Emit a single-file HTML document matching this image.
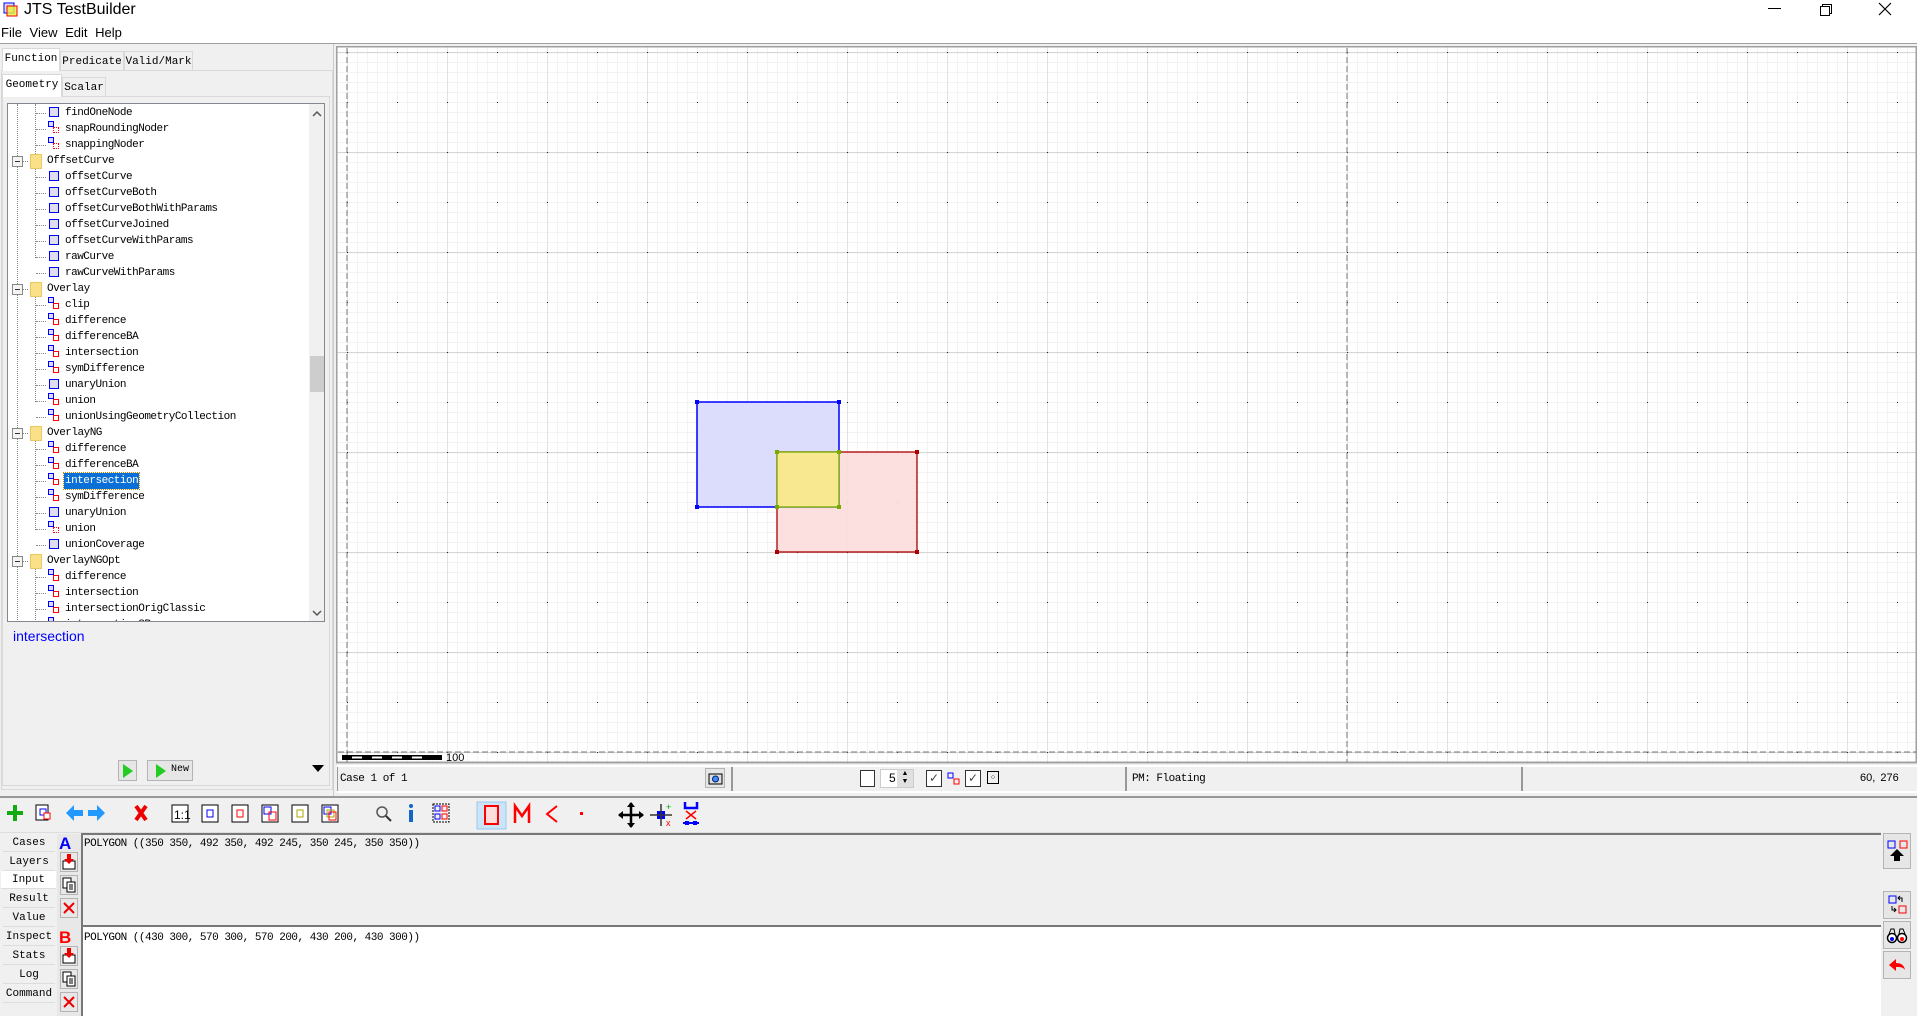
<!DOCTYPE html>
<html><head><meta charset="utf-8"><style>
*{box-sizing:border-box;margin:0;padding:0}
body{width:1917px;height:1016px;background:#f0f0f0;position:relative;overflow:hidden;font-family:"Liberation Sans",sans-serif;}
.a{position:absolute}
.m{font-family:"Liberation Mono","Noto Serif CJK SC",monospace;font-size:11px;color:#000;letter-spacing:-0.5px}
.row{position:absolute;height:16px;line-height:16px;white-space:nowrap}
.ic{position:absolute}
.tab{position:absolute;border:1px solid #d9d9d9;border-bottom:none;background:#f0f0f0;font-family:"Liberation Mono",monospace;font-size:11px;text-align:center}
.lt{position:absolute;left:3px;width:52px;height:18px;font-family:"Liberation Mono",monospace;font-size:11px;text-align:center;line-height:18px;border-bottom:1px solid #ddd;background:#f0f0f0}
.btn{position:absolute;border:1px solid #b4b4b4;background:#e6e6e6}
</style></head><body>
<!-- title bar -->
<div class="a" style="left:0;top:0;width:1917px;height:43px;background:#fff"></div>
<svg class="a" style="left:3px;top:2px" width="16" height="16"><rect x="1" y="1" width="10" height="10" fill="#dde" stroke="#00f"/><rect x="4" y="4" width="10" height="10" fill="#ee3" stroke="#e00" fill-opacity=".8"/></svg>
<div class="a" style="left:24px;top:0;font-size:16px;line-height:20px">JTS TestBuilder</div>
<div class="a" style="left:1768px;top:8px;width:13px;height:1px;background:#000"></div>
<div class="a" style="left:1822px;top:4px;width:10px;height:10px;border:1px solid #000"></div>
<div class="a" style="left:1820px;top:6px;width:10px;height:10px;border:1px solid #000;background:#fff"></div>
<svg class="a" style="left:1878px;top:2px" width="14" height="14"><path d="M1 1L13 13M13 1L1 13" stroke="#000" stroke-width="1.2"/></svg>
<div class="a" style="left:1px;top:25px;font-size:13px;line-height:16px;word-spacing:4px">File View Edit Help</div>
<div class="a" style="left:0;top:43px;width:1917px;height:1px;background:#a0a0a0"></div>

<!-- left panel -->
<div class="a" style="left:1px;top:70px;width:332px;height:720px;border:1px solid #d9d9d9;background:#f0f0f0"></div>
<div class="tab" style="left:2px;top:48px;width:58px;height:23px;background:#fff;line-height:20px">Function</div>
<div class="tab" style="left:60px;top:51px;width:64px;height:19px;line-height:20px">Predicate</div>
<div class="tab" style="left:124px;top:51px;width:69px;height:19px;line-height:20px">Valid/Mark</div>
<div class="a" style="left:2px;top:96px;width:328px;height:690px;border:1px solid #d9d9d9;background:#f0f0f0"></div>
<div class="tab" style="left:2px;top:74px;width:60px;height:23px;background:#fff;line-height:20px">Geometry</div>
<div class="tab" style="left:62px;top:77px;width:44px;height:19px;line-height:20px">Scalar</div>

<div class="a m" style="left:7px;top:103px;width:318px;height:519px;border:1px solid #828790;background:#fff;overflow:hidden">
 <div class="a" style="left:9px;top:0;height:520px;border-left:1px dotted #888"></div>
 <div class="a" style="left:27px;top:0;height:52px;border-left:1px dotted #888"></div>
 <div class="a" style="left:27px;top:58px;height:96px;border-left:1px dotted #888"></div>
 <div class="a" style="left:27px;top:186px;height:112px;border-left:1px dotted #888"></div>
 <div class="a" style="left:27px;top:330px;height:96px;border-left:1px dotted #888"></div>
 <div class="a" style="left:27px;top:458px;height:70px;border-left:1px dotted #888"></div>
 <div id="tree"></div>
 <div class="a" style="left:301px;top:0;width:16px;height:518px;background:#f0f0f0"></div>
 <div class="a" style="left:302px;top:252px;width:14px;height:36px;background:#cdcdcd"></div>
 <svg class="a" style="left:304px;top:6px" width="10" height="8"><path d="M1 6L5 2L9 6" stroke="#555" stroke-width="1.5" fill="none"/></svg>
 <svg class="a" style="left:304px;top:505px" width="10" height="8"><path d="M1 2L5 6L9 2" stroke="#555" stroke-width="1.5" fill="none"/></svg>
</div>
<div class="a" style="left:13px;top:628px;font-size:14px;color:#00f">intersection</div>
<div class="btn" style="left:118px;top:760px;width:19px;height:21px"></div>
<svg class="a" style="left:122px;top:763px" width="12" height="16"><path d="M1 1L11 8L1 15Z" fill="#2c2"/></svg>
<div class="btn" style="left:147px;top:760px;width:46px;height:21px"></div>
<svg class="a" style="left:155px;top:763px" width="12" height="16"><path d="M1 1L11 8L1 15Z" fill="#2c2"/></svg>
<div class="a" style="left:171px;top:764px;font-family:'Liberation Mono',monospace;font-size:10px">New</div>
<svg class="a" style="left:312px;top:765px" width="12" height="8"><path d="M0 0H12L6 7Z" fill="#000"/></svg>
<div class="a" style="left:333px;top:44px;width:4px;height:752px;background:#f0f0f0;border-left:1px solid #ccc"></div>

<!-- canvas -->
<svg class="a" style="left:336px;top:46px" width="1581" height="718">
<defs>
<pattern id="mn" x="1" y="6" width="10" height="10" patternUnits="userSpaceOnUse"><path d="M0 0V10M0 0H10" stroke="#ececec" stroke-width="1.3"/></pattern>
<pattern id="mj" x="11" y="6" width="100" height="100" patternUnits="userSpaceOnUse"><path d="M0 0.5V100M0 0.5H100" stroke="#d6d6d6" stroke-width="1.3"/></pattern>
<pattern id="dt" x="11" y="6" width="50" height="50" patternUnits="userSpaceOnUse"><rect x="-1" y="-1" width="2" height="2" fill="#222"/></pattern>
</defs>
<rect width="1581" height="718" fill="#fff"/>
<rect width="1581" height="718" fill="url(#mn)"/>
<rect width="1581" height="718" fill="url(#mj)"/>
<rect width="1581" height="718" fill="url(#dt)"/>
<rect x="0.5" y="0.5" width="1580" height="716" fill="none" stroke="#a0a0a0" stroke-width="2"/>
<path d="M11 2V716M1011 2V716M2 706H1581" stroke="#777" stroke-dasharray="6 3" stroke-width="1"/>
<g transform="translate(11,706)">
<rect x="350" y="-350" width="142" height="105" fill="#dcdcfc" stroke="#00f" stroke-width="1.3"/>
<rect x="430" y="-300" width="140" height="100" fill="#fcdcdc" fill-opacity=".9" stroke="#a00" stroke-width="1.3"/>
<rect x="350" y="-350" width="142" height="105" fill="none" stroke="#00f" stroke-width="1.3"/>
<rect x="430" y="-300" width="62" height="55" fill="#f8e890" stroke="#7a0" stroke-width="1.3"/>
<g fill="#00f"><rect x="348" y="-352" width="4" height="4"/><rect x="490" y="-352" width="4" height="4"/><rect x="348" y="-247" width="4" height="4"/></g>
<g fill="#a00"><rect x="568" y="-302" width="4" height="4"/><rect x="568" y="-202" width="4" height="4"/><rect x="428" y="-202" width="4" height="4"/></g>
<g fill="#7a0"><rect x="428" y="-302" width="4" height="4"/><rect x="490" y="-302" width="4" height="4"/><rect x="428" y="-247" width="4" height="4"/><rect x="490" y="-247" width="4" height="4"/></g>
</g>
<rect x="6" y="709" width="100" height="5" fill="#000"/>
<path d="M16 711.5H96" stroke="#fff" stroke-width="2" stroke-dasharray="10 10"/>
<text x="110" y="715" font-family="Liberation Sans" font-size="11">100</text>
</svg>

<!-- status row -->
<div class="a" style="left:337px;top:765px;width:1580px;height:28px;background:#fff"></div>
<div class="a" style="left:337px;top:767px;width:394px;height:24px;background:#f0f0f0;border-left:1px solid #999"></div>
<div class="a m" style="left:340px;top:773px">Case 1 of 1</div>
<div class="btn" style="left:705px;top:768px;width:20px;height:20px"></div>
<svg class="a" style="left:708px;top:771px" width="15" height="14"><rect x="1" y="3" width="13" height="10" fill="#ddd" stroke="#000"/><circle cx="7.5" cy="8" r="3" fill="#48f" stroke="#026"/></svg>
<div class="a" style="left:731px;top:767px;width:394px;height:24px;background:#f0f0f0;border-left:2px solid #999"></div>
<div class="a" style="left:860px;top:770px;width:15px;height:17px;border:1px solid #333;background:#fff"></div>
<div class="a" style="left:880px;top:769px;width:34px;height:19px;border:1px solid #ccc;background:#fff;font-size:12px;padding-left:8px;line-height:17px">5</div>
<div class="a" style="left:897px;top:770px;width:16px;height:17px;background:#e0e0e0;font-size:7px;line-height:8px;text-align:center">▲<br>▼</div>
<div class="a" style="left:926px;top:770px;width:16px;height:17px;border:1px solid #333;background:#fff;font-size:12px;text-align:center;color:#444">✓</div>
<svg class="a" style="left:947px;top:772px" width="14" height="14"><rect x="1" y="1" width="5" height="5" fill="none" stroke="#00f"/><rect x="7" y="7" width="5" height="5" fill="none" stroke="#f00"/></svg>
<div class="a" style="left:965px;top:770px;width:16px;height:17px;border:1px solid #333;background:#fff;font-size:12px;text-align:center;color:#444">✓</div>
<div class="a" style="left:987px;top:771px;width:12px;height:13px;border:1px solid #000;font-size:8px;line-height:11px;text-align:center">⁘</div>
<div class="a" style="left:1125px;top:767px;width:396px;height:24px;background:#f0f0f0;border-left:2px solid #999"></div>
<div class="a m" style="left:1132px;top:773px">PM: Floating</div>
<div class="a" style="left:1521px;top:767px;width:396px;height:24px;background:#f0f0f0;border-left:2px solid #999"></div>
<div class="a" style="left:1860px;top:772px;font-size:11px;word-spacing:2px">60, 276</div>
<div class="a" style="left:0;top:796px;width:1917px;height:2px;background:#999"></div>

<!-- toolbar -->
<svg class="a" style="left:0;top:800px" width="720" height="30">
<path d="M13 5h4v6h6v4h-6v6h-4v-6h-6v-4h6z" fill="#1a1"/>
<rect x="36" y="5" width="12" height="15" fill="#fff" stroke="#000"/><rect x="40" y="9" width="6" height="6" fill="none" stroke="#00f"/><rect x="44" y="13" width="6" height="6" fill="#fff" stroke="#f00"/>
<path d="M66 13l8-8v5h9v6h-9v5z" fill="#29f"/>
<path d="M115 13l-8-8v5h-9v6h9v5z" fill="#29f" transform="translate(-10,0)"/>
<path d="M136 6l10 14M146 6l-10 14" stroke="#e00" stroke-width="4"/>
<rect x="172" y="5" width="16" height="17" fill="#fff" stroke="#000"/><text x="174" y="19" font-size="12" font-family="Liberation Sans">1:1</text>
<rect x="202" y="5" width="16" height="17" fill="#fff" stroke="#000"/><rect x="207" y="10" width="6" height="7" fill="none" stroke="#00f"/>
<rect x="232" y="5" width="16" height="17" fill="#fff" stroke="#000"/><rect x="237" y="10" width="6" height="7" fill="none" stroke="#f00"/>
<rect x="262" y="5" width="16" height="17" fill="#fff" stroke="#000"/><rect x="264" y="7" width="7" height="7" fill="none" stroke="#00f"/><rect x="269" y="12" width="7" height="8" fill="none" stroke="#f00"/>
<rect x="292" y="5" width="16" height="17" fill="#fff" stroke="#000"/><rect x="297" y="10" width="6" height="7" fill="none" stroke="#aa0"/>
<rect x="322" y="5" width="16" height="17" fill="#fff" stroke="#000"/><rect x="324" y="7" width="7" height="7" fill="none" stroke="#00f"/><rect x="327" y="10" width="7" height="7" fill="none" stroke="#aa0"/><rect x="329" y="12" width="7" height="8" fill="none" stroke="#f00"/>
<circle cx="382" cy="12" r="5" fill="none" stroke="#555" stroke-width="1.5"/><path d="M386 16l5 5" stroke="#333" stroke-width="2"/>
<rect x="409" y="10" width="4" height="12" fill="#16c"/><circle cx="411" cy="6" r="2" fill="#16c"/>
<rect x="433" y="4" width="16" height="18" fill="none" stroke="#000" stroke-dasharray="2 1"/><rect x="435" y="6" width="5" height="5" fill="none" stroke="#00f"/><rect x="442" y="6" width="5" height="5" fill="none" stroke="#f00"/><rect x="435" y="14" width="5" height="5" fill="none" stroke="#00f"/><rect x="442" y="14" width="5" height="5" fill="none" stroke="#f00"/>
<rect x="477" y="2" width="29" height="27" fill="#cce4f7" stroke="#99c9ef"/>
<rect x="485" y="6" width="13" height="18" fill="#fdd" stroke="#f00" stroke-width="2"/>
<path d="M515 23V6l7 10l7-10v17" fill="none" stroke="#f00" stroke-width="2.5"/>
<path d="M557 6l-10 8l10 8" fill="none" stroke="#f00" stroke-width="2"/>
<rect x="580" y="12" width="3" height="3" fill="#f00"/>
<path d="M631 3v24M619 15h24" stroke="#000" stroke-width="2.5"/><path d="M627 7l4-5l4 5zM627 23l4 5l4-5zM623 11l-5 4l5 4zM639 11l5 4l-5 4z" fill="#000"/>
<rect x="657" y="11" width="8" height="8" fill="#00f"/><path d="M650 15h22M661 4v22" stroke="#333" stroke-width="1.5"/><text x="666" y="10" font-size="9" fill="#0a0">+</text><text x="666" y="26" font-size="9" fill="#f00">x</text>
<path d="M685 2v6h12v-6" fill="none" stroke="#00f" stroke-width="2.5"/><path d="M686 11l10 8M696 11l-10 8" stroke="#f00" stroke-width="1.5"/><path d="M683 23h16" stroke="#00f" stroke-width="2"/><rect x="685" y="21" width="4" height="4" fill="#00f"/><rect x="693" y="21" width="4" height="4" fill="#00f"/>
</svg>

<!-- input area -->
<div class="a" style="left:0;top:832px;width:1917px;height:1px;background:#ddd"></div>
<div class="lt" style="top:834px">Cases</div>
<div class="lt" style="top:853px">Layers</div>
<div class="lt" style="top:871px;background:#fff;left:1px;width:55px">Input</div>
<div class="lt" style="top:890px">Result</div>
<div class="lt" style="top:909px">Value</div>
<div class="lt" style="top:928px">Inspect</div>
<div class="lt" style="top:947px">Stats</div>
<div class="lt" style="top:966px">Log</div>
<div class="lt" style="top:985px">Command</div>
<div class="a" style="left:57px;top:834px;width:24px;height:182px;background:#e8e8e8"></div>
<div class="a" style="left:59px;top:834px;font-size:17px;font-weight:bold;color:#00f">A</div>
<div class="a" style="left:59px;top:928px;font-size:17px;font-weight:bold;color:#f00">B</div>
<div id="side"></div>
<div class="a" style="left:81px;top:833px;width:1800px;height:94px;background:#efefef;border-top:2px solid #777;border-left:2px solid #777;border-bottom:2px solid #777"></div>
<div class="a" style="left:81px;top:927px;width:1800px;height:89px;background:#fff;border-left:2px solid #777"></div>
<div class="a m" style="left:84px;top:838px;font-size:11px">POLYGON ((350 350, 492 350, 492 245, 350 245, 350 350))</div>
<div class="a m" style="left:84px;top:932px;font-size:11px">POLYGON ((430 300, 570 300, 570 200, 430 200, 430 300))</div>
<div class="a" style="left:1881px;top:830px;width:36px;height:186px;background:#f0f0f0"></div>
<div class="btn" style="left:1883px;top:833px;width:28px;height:36px"></div>
<svg class="a" style="left:1884px;top:835px" width="26" height="30"><rect x="4" y="6" width="7" height="7" fill="none" stroke="#00f"/><rect x="16" y="6" width="7" height="7" fill="none" stroke="#f00"/><path d="M13 14l-7 7h4v5h6v-5h4z" fill="#000"/></svg>
<div class="btn" style="left:1883px;top:891px;width:28px;height:28px"></div>
<svg class="a" style="left:1884px;top:893px" width="26" height="24"><rect x="5" y="3" width="7" height="7" fill="none" stroke="#00f"/><rect x="15" y="13" width="7" height="7" fill="none" stroke="#f00"/><path d="M16 3l-2 2l2 2M14 5h4v4M10 19l2-2l-2-2M12 17h-4v-4" stroke="#000" fill="none"/></svg>
<div class="btn" style="left:1883px;top:921px;width:28px;height:28px"></div>
<svg class="a" style="left:1884px;top:923px" width="26" height="24"><circle cx="8" cy="15" r="4.5" fill="#fff" stroke="#000" stroke-width="1.5"/><circle cx="18" cy="15" r="4.5" fill="#fff" stroke="#000" stroke-width="1.5"/><circle cx="8" cy="16" r="2" fill="#00f"/><circle cx="18" cy="16" r="2" fill="#f00"/><path d="M5 11l2-5h3l1 5M15 11l1-5h3l2 5" fill="none" stroke="#000"/></svg>
<div class="btn" style="left:1883px;top:951px;width:28px;height:28px"></div>
<svg class="a" style="left:1884px;top:953px" width="26" height="24"><path d="M5 12l7-6v4c5 0 8 2 9 7c-2-3-5-3-9-3v4z" fill="#f00"/></svg>

<script>
var rows=[["findOneNode","s"],["snapRoundingNoder","d"],["snappingNoder","d"],["OffsetCurve","f"],["offsetCurve","s"],["offsetCurveBoth","s"],["offsetCurveBothWithParams","s"],["offsetCurveJoined","s"],["offsetCurveWithParams","s"],["rawCurve","s"],["rawCurveWithParams","s"],["Overlay","f"],["clip","b"],["difference","b"],["differenceBA","b"],["intersection","b"],["symDifference","b"],["unaryUnion","s"],["union","b"],["unionUsingGeometryCollection","b"],["OverlayNG","f"],["difference","b"],["differenceBA","b"],["intersection","x"],["symDifference","b"],["unaryUnion","s"],["union","d"],["unionCoverage","s"],["OverlayNGOpt","f"],["difference","b"],["intersection","b"],["intersectionOrigClassic","b"],["intersectionSR","b"]];
var h="";
rows.forEach(function(r,i){var t=1+16*i;var n=r[0],k=r[1];
if(k=="f"){h+='<div class="ic" style="left:4px;top:'+(t+3)+'px;width:11px;height:11px;border:1px solid #888;background:#f4f4f4"><div style="position:absolute;left:2px;top:4px;width:5px;height:1px;background:#333"></div></div>';
h+='<div class="ic" style="left:15px;top:'+(t+8)+'px;width:5px;border-top:1px dotted #888"></div>';
h+='<div class="ic" style="left:22px;top:'+(t+1)+'px;width:12px;height:15px;background:#fbe08a;border:1px solid #e8c860"></div>';
h+='<div class="row" style="left:39px;top:'+t+'px">'+n+'</div>';}
else{h+='<div class="ic" style="left:28px;top:'+(t+8)+'px;width:10px;border-top:1px dotted #888"></div>';
if(k=="s")h+='<div class="ic" style="left:41px;top:'+(t+2)+'px;width:10px;height:10px;border:1px solid #00f;background:#dde"></div>';
else{h+='<div class="ic" style="left:40px;top:'+(t)+'px;width:6px;height:6px;border:1px solid #00f;background:#dde"></div>';
h+='<div class="ic" style="left:45px;top:'+(t+6)+'px;width:6px;height:6px;border:1px '+(k=="d"?"dotted":"solid")+' #f00;background:#fff"></div>';}
var sel=k=="x";
h+='<div class="row" style="left:'+(sel?'56px':'57px')+';top:'+t+'px;'+(sel?'background:#0a6fd6;color:#fff;outline:1px dotted #c80;padding:0 1px;':'')+'">'+n+'</div>';}
});
document.getElementById("tree").innerHTML=h;
var s="";
[852,875,898,946,969,992].forEach(function(y,i){var k=i%3;
s+='<div class="btn" style="left:60px;top:'+y+'px;width:18px;height:20px;background:#e8e8e8"></div>';
if(k==0)s+='<svg class="a" style="left:62px;top:'+(y+2)+'px" width="14" height="16"><rect x="1" y="7" width="12" height="8" fill="#fff" stroke="#000"/><path d="M5 0h4v5h3l-5 5l-5-5h3z" fill="#e00"/></svg>';
if(k==1)s+='<svg class="a" style="left:62px;top:'+(y+2)+'px" width="14" height="16"><rect x="1" y="1" width="8" height="10" fill="#fff" stroke="#000"/><rect x="5" y="5" width="8" height="10" fill="#fff" stroke="#000"/><path d="M7 8h4M7 10h4M7 12h4" stroke="#000"/></svg>';
if(k==2)s+='<svg class="a" style="left:62px;top:'+(y+3)+'px" width="14" height="14"><path d="M2 2l10 10M12 2l-10 10" stroke="#e00" stroke-width="2"/></svg>';});
document.getElementById("side").innerHTML=s;
</script>
</body></html>
